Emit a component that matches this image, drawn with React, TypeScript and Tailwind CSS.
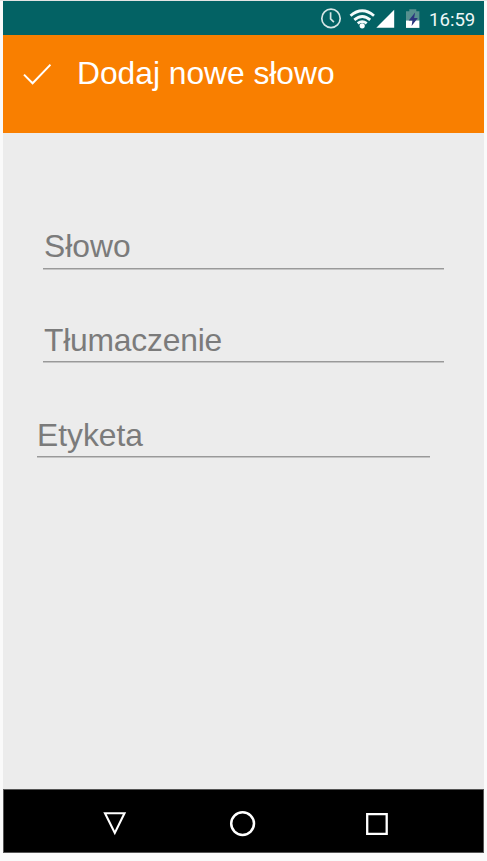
type FieldProps = { label: string; className: string; labelClassName?: string };

function Field({ label, className, labelClassName = "" }: FieldProps) {
  return (
    <div className={`flex flex-col ${className}`}>
      <span className={`h-9 text-[31.8px] leading-9 text-[#7b7b7b] ${labelClassName}`}>{label}</span>
      <div className="mt-1 h-0.5 border-b border-[#c4c4c4] bg-[#999999]" />
    </div>
  );
}

function StatusBar() {
  return (
    <div className="flex h-[34px] items-center bg-[#036264] pl-[317px] text-white">
      <svg className="h-[34px] w-[104px]" viewBox="320 1 104 34" fill="none">
        <circle cx="331" cy="18.4" r="9.2" stroke="#d5e5e5" strokeWidth="1.7" />
        <path d="M330.6 12.3v6.6l3.3 3.2" stroke="#d5e5e5" strokeWidth="1.7" />
        <g stroke="#f4fbfb" strokeWidth="2.8">
          <path d="M350.5 15.7Q362.2 5.8 374 15.7" />
          <path d="M354.3 19.9Q362.2 13 370.2 19.9" />
          <path d="M357.7 23.4Q362.2 19.8 366.7 23.4" />
        </g>
        <circle cx="362.2" cy="25.8" r="2.6" fill="white" />
        <path d="M394.2 9.8V27.8H376.3Z" fill="white" />
        <path d="M406 11.3h3.3v-2h7v2h3.1v9.4H406Z" fill="#57908f" />
        <path d="M406 20.5h13.4v7.4H406Z" fill="white" />
        <path d="M415.1 12.5L408.7 20.6h3.7l-.8 5.4 6.2-8h-3.7Z" fill="#2b347e" />
      </svg>
      <span className="ml-[5px] pt-[3px] font-[Roboto,sans-serif] text-[18.6px] leading-6 text-[#edf7f7]">16:59</span>
    </div>
  );
}

function Header() {
  return (
    <header className="flex h-[98px] items-start bg-[#f97f00] pt-5 pl-5 text-white">
      <svg className="h-9 w-[28px] shrink-0" viewBox="23 55 28 36" fill="none">
        <path d="M24 74.6L32.6 83.3L50.5 64.7" stroke="white" strokeWidth="2" />
      </svg>
      <h1 className="ml-[26px] text-[31.8px] leading-9 tracking-[-0.03px] whitespace-nowrap">Dodaj nowe słowo</h1>
    </header>
  );
}

function NavigationBar() {
  return (
    <nav className="flex h-16 items-center border border-[#555555] bg-black">
      <svg className="ml-[98px] h-[36px] w-[26px]" viewBox="102 803 26 36" fill="none">
        <path d="M105 813.3H124.5L114.8 833Z" stroke="white" strokeWidth="2.1" />
      </svg>
      <svg className="ml-[101px] h-[36px] w-[28px]" viewBox="229 803 28 36" fill="none">
        <circle cx="242.6" cy="823.6" r="11.4" stroke="white" strokeWidth="2.5" />
      </svg>
      <svg className="ml-[107px] h-[36px] w-[26px]" viewBox="364 803 26 36" fill="none">
        <path d="M367.2 814.2H386.7V833.8H367.2Z" stroke="white" strokeWidth="2.3" />
      </svg>
    </nav>
  );
}

export default function App() {
  return (
    <div className="h-[861px] w-[487px] border-t border-[#e4e4e4] bg-[#fafafa] px-[3px] font-['Liberation_Sans',Arial,sans-serif]">
      <div className="flex h-[852px] w-[481px] flex-col">
        <StatusBar />
        <Header />
        <main className="flex-1 bg-[#ececec] pt-[95px]">
          <Field label="Słowo" className="ml-10 w-[401px]" labelClassName="pl-px" />
          <Field label="Tłumaczenie" className="mt-[51px] ml-10 w-[401px]" labelClassName="pt-px pl-px tracking-[-0.2px]" />
          <Field label="Etyketa" className="mt-[53px] ml-[34px] w-[393px]" labelClassName="pt-px" />
        </main>
        <NavigationBar />
      </div>
    </div>
  );
}
